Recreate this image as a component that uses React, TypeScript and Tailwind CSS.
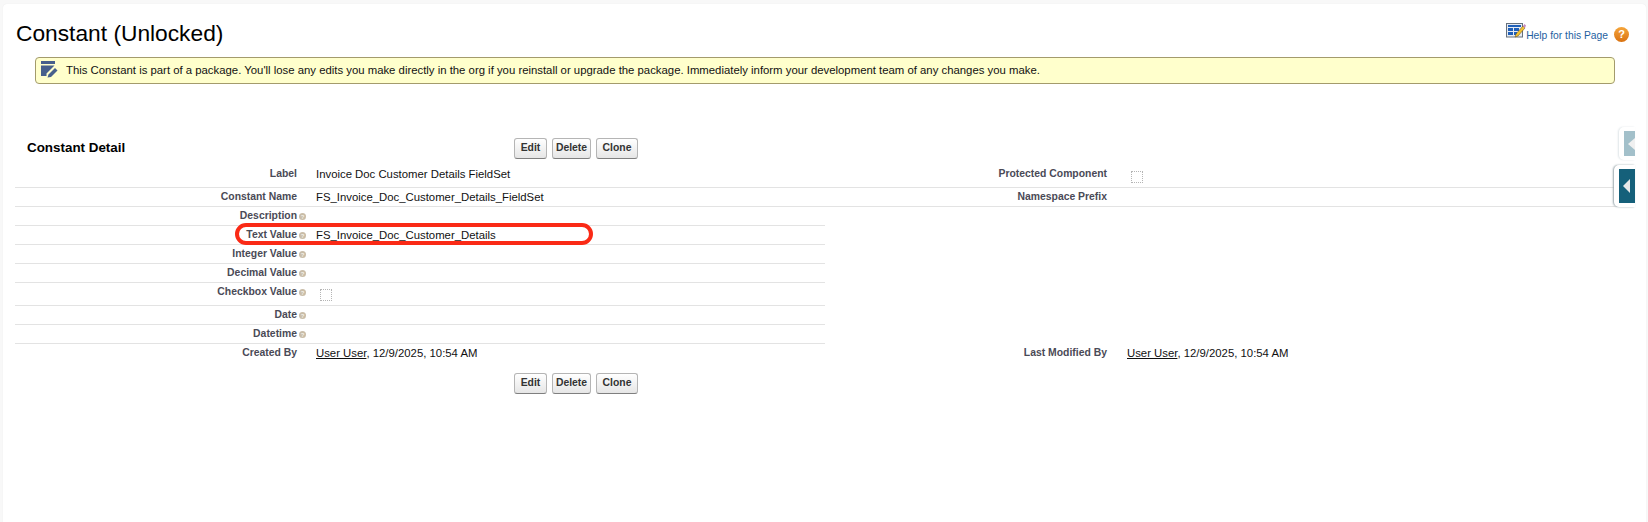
import { Fragment } from 'react'

const font = 'font-["Liberation_Sans",Arial,sans-serif]'

function HelpDot() {
  return (
    <span className="ml-[2px] inline-flex h-[7px] w-[7px] items-center justify-center rounded-full bg-[#c9bda8] text-[6px] font-bold leading-none text-[#f4f0e8]">?</span>
  )
}

function Checkbox() {
  return <span className="block h-[12px] w-[12px] border border-dotted border-[#b5b5b5]" />
}

function Buttons() {
  return (
    <div className="flex gap-[5px]">
      {[
        { name: 'Edit', w: 'w-[33px]' },
        { name: 'Delete', w: 'w-[39px]' },
        { name: 'Clone', w: 'w-[42px]' },
      ].map((b) => (
        <button
          key={b.name}
          className={`${b.w} h-[21px] rounded-[3px] border border-[#b5b5b5] border-b-[#7f7f7f] bg-gradient-to-b from-white to-[#e6e6e6] text-[10.4px] font-bold leading-none text-[#333]`}
        >
          {b.name}
        </button>
      ))}
    </div>
  )
}

function Row({ label, help, value, tall, wide, right, last }: any) {
  return (
    <div className={`flex ${tall ? 'h-[23px]' : 'h-[19px]'} ${last ? '' : 'border-b border-[#e3e3e3]'} ${wide ? 'w-full' : 'w-[810px]'}`}>
      <div className="flex w-[291px] justify-end pt-[3px] text-[10.4px] font-bold leading-[12px] text-[#4a4a56]">
        <span>{label}</span>
        {help ? <span className="mt-[3px] flex h-[7px]"><HelpDot /></span> : <span className="w-[9px]" />}
      </div>
      <div className="w-[519px] pl-[10px] pt-[3px] text-[11.35px] leading-[13px] text-[#111]">{value}</div>
      {right}
    </div>
  )
}

function RightCell({ label, value }: { label: string; value?: React.ReactNode }) {
  return (
    <Fragment>
      <div className="w-[282px] pt-[3px] text-right text-[10.4px] font-bold leading-[12px] text-[#4a4a56]">{label}</div>
      <div className="pl-[20px] pt-[3px] text-[11.35px] leading-[13px] text-[#111]">{value}</div>
    </Fragment>
  )
}

export default function App() {
  const stamp = (
    <span>
      <span className="underline">User User</span>, 12/9/2025, 10:54 AM
    </span>
  )

  return (
    <div className={`${font} h-[522px] w-full overflow-hidden bg-[#f8f8f8] pl-[3px] pt-[4px]`}>
      <div className="relative h-[518px] w-[1643px] rounded-tl-[4px] rounded-tr-[4px] bg-white pl-[12px] pt-[13px] shadow-[0_0_1px_#e4e4e4]">
        <div className="flex h-[40px] justify-between">
          <h1 className="ml-[1px] mt-[2px] text-[22.75px] leading-[28px] text-black">Constant (Unlocked)</h1>
          <div className="mr-[17px] flex items-start pt-[6px]">
            <svg width="20" height="15" viewBox="0 0 20 15">
              <rect x="0.5" y="0.5" width="16" height="13.5" fill="#e6ebf2" stroke="#66717d" />
              <rect x="2" y="2" width="13" height="2" fill="#1f5fb8" />
              <rect x="2" y="5" width="5" height="3" fill="#1f5fb8" />
              <rect x="8" y="5" width="5" height="3" fill="#1f5fb8" />
              <rect x="2" y="9" width="5" height="3" fill="#1f5fb8" />
              <rect x="8" y="9" width="3" height="3" fill="#1f5fb8" />
              <path d="M9 14 L10 11 L17 3 L19 5 L12 13 Z" fill="#f2c230" stroke="#5c4218" strokeWidth="0.5" />
              <path d="M17 3 L18.5 1 L20 2.5 L19 5 Z" fill="#c98ac0" />
            </svg>
            <a className="mt-[6px] text-[10.3px] leading-[14px] text-[#1f5f9f]">Help for this Page</a>
            <span className="ml-[6px] mt-[4px] flex h-[15px] w-[15px] items-center justify-center rounded-full bg-gradient-to-b from-[#f5a53a] to-[#d9720f] text-[11px] font-bold leading-none text-white">?</span>
          </div>
        </div>

        <div className="ml-[20px] flex h-[27px] w-[1580px] items-center rounded-[4px] border border-[#a39b6c] bg-[#ffffcc] pl-[5px]">
          <svg width="17" height="17" viewBox="0 0 17 17" className="mb-[2px] shrink-0">
            <rect x="0" y="0" width="14" height="3" fill="#47608c" />
            <path d="M0 4.5 H13.5 L5.5 12.5 V15 H0 Z" fill="#47608c" />
            <path d="M6.5 16.5 L7.5 13.5 L14 7 L16.5 9.5 L10 16 Z" fill="#47608c" />
          </svg>
          <p className="mb-[1px] ml-[8px] text-[11.35px] leading-[14px] text-[#111]">
            This Constant is part of a package. You'll lose any edits you make directly in the org if you reinstall or upgrade the package. Immediately inform your development team of any changes you make.
          </p>
        </div>

        <div className="mr-[29px] mt-[54px]">
          <div className="flex h-[27px] items-start">
            <h2 className="mt-[2px] w-[499px] pl-[12px] text-[13.4px] font-bold leading-[16px] text-black">Constant Detail</h2>
            <Buttons />
          </div>
          <Row wide tall label="Label" value="Invoice Doc Customer Details FieldSet" right={<RightCell label="Protected Component" value={<span className="ml-[4px] mt-[3px] block"><Checkbox /></span>} />} />
          <Row wide label="Constant Name" value="FS_Invoice_Doc_Customer_Details_FieldSet" right={<RightCell label="Namespace Prefix" />} />
          <Row help label="Description" />
          <Row help label="Text Value" value="FS_Invoice_Doc_Customer_Details" />
          <Row help label="Integer Value" />
          <Row help label="Decimal Value" />
          <Row help tall label="Checkbox Value" value={<span className="ml-[4px] mt-[3px] block"><Checkbox /></span>} />
          <Row help label="Date" />
          <Row help label="Datetime" />
          <Row last wide label="Created By" value={stamp} right={<RightCell label="Last Modified By" value={stamp} />} />
          <div className="ml-[499px] mt-[10px]">
            <Buttons />
          </div>
        </div>

        <div className="absolute left-[232px] top-[219px] h-[22px] w-[358px] rounded-full border-[4px] border-[#fa2a16]" />

        <div className="absolute left-[1616px] top-[123px] h-[33px] w-[16px] overflow-hidden rounded-l-[5px] bg-white pl-[5px] pt-[4px] shadow-[-1px_0_2px_#dfe5e8]">
          <div className="flex h-[25px] w-[11px] items-center bg-[#a3c0ca] pl-[4px]">
            <span className="h-0 w-0 border-y-[6px] border-r-[7px] border-y-transparent border-r-[#f0f0f0]" />
          </div>
        </div>
        <div className="absolute left-[1611px] top-[161px] h-[42px] w-[21px] overflow-hidden rounded-l-[5px] bg-white pl-[5px] pt-[4px] shadow-[-1px_0_2px_#9aa7ad]">
          <div className="flex h-[34px] w-[16px] items-center bg-[#15607a] pl-[4px]">
            <span className="h-0 w-0 border-y-[7px] border-r-[7px] border-y-transparent border-r-[#e8e8e8]" />
          </div>
        </div>
      </div>
    </div>
  )
}
